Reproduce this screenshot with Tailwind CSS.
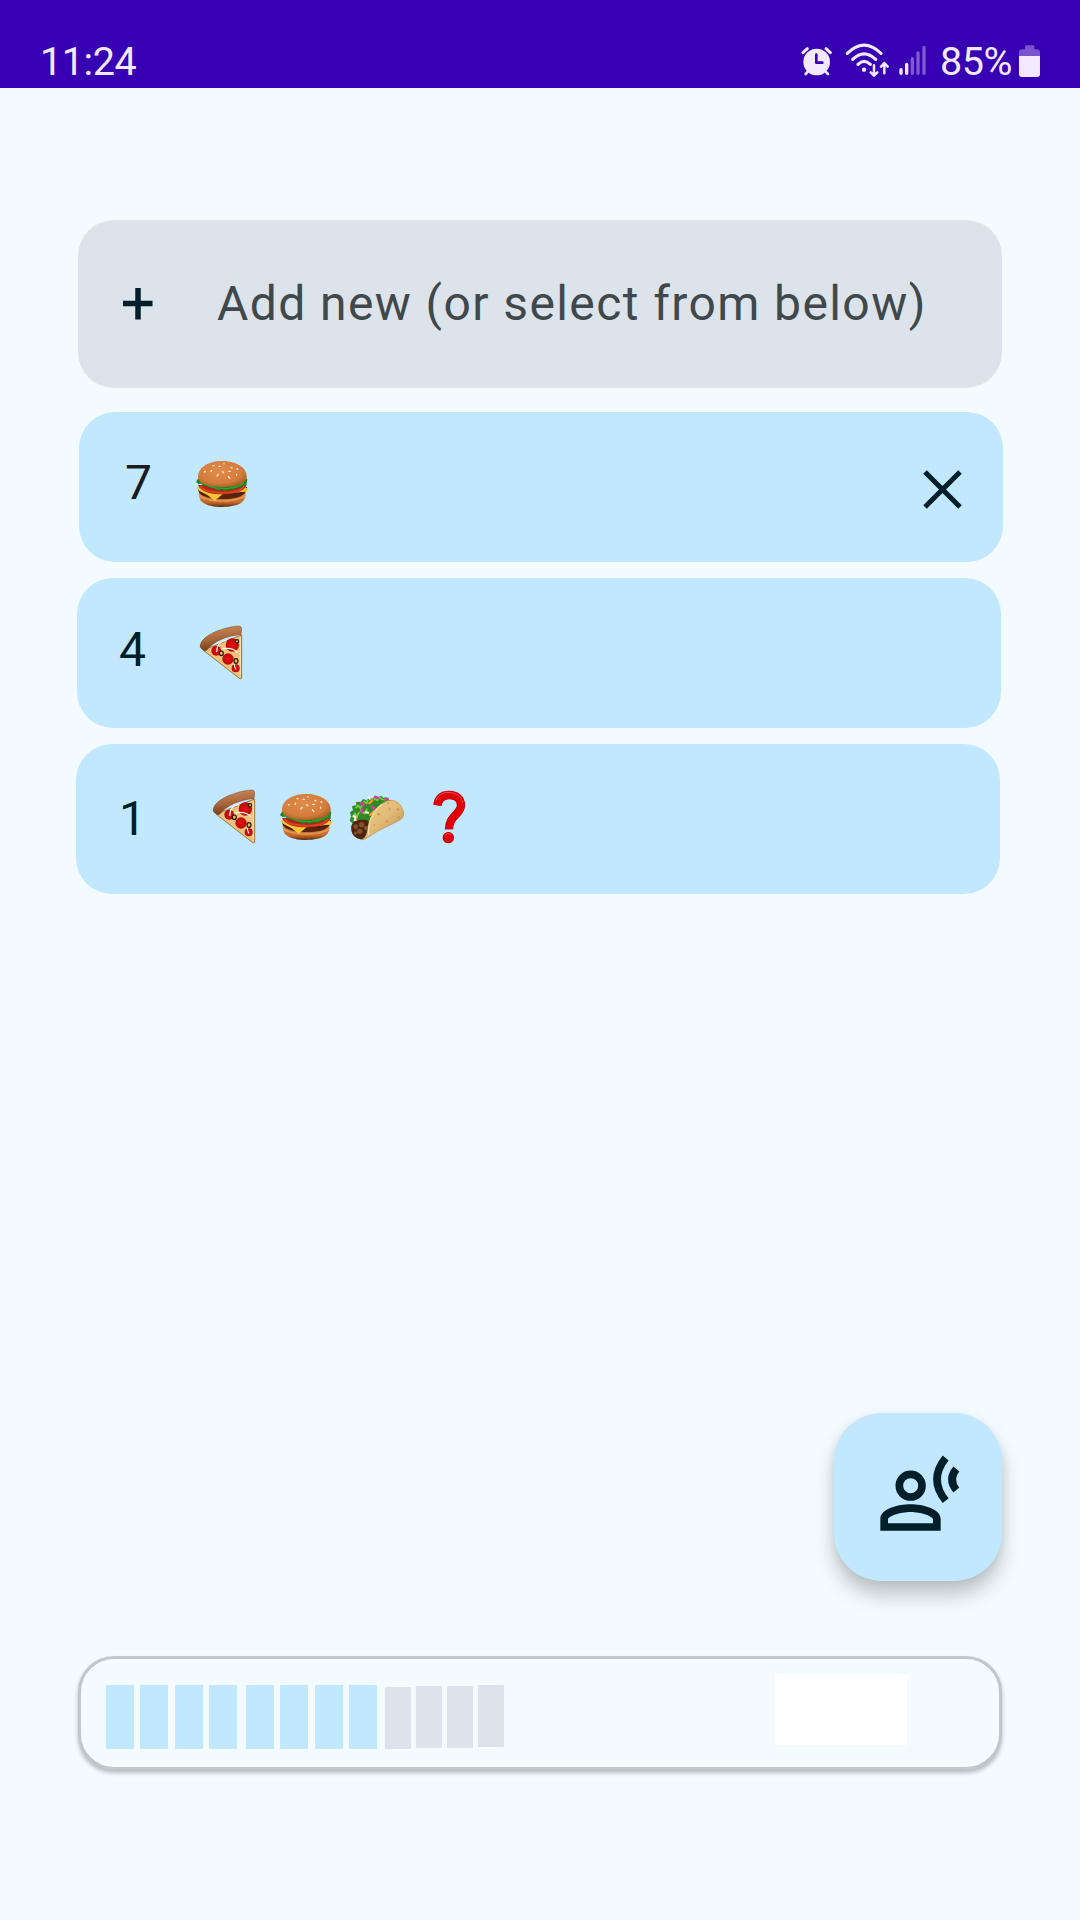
<!DOCTYPE html>
<html lang="en">
<head>
<meta charset="utf-8">
<meta name="viewport" content="width=device-width, initial-scale=1">
<title>Food list</title>
<script src="https://cdn.jsdelivr.net/npm/@tailwindcss/browser@4"></script>
</head>
<body class="bg-[#f3fbff] font-['Roboto',sans-serif]">
<svg class="absolute h-0 w-0" aria-hidden="true">
  <defs>
    <radialGradient id="bun" cx=".45" cy=".4" r=".65"><stop offset="0" stop-color="#e08c4c"/><stop offset=".7" stop-color="#d47c3c"/><stop offset="1" stop-color="#a95a22"/></radialGradient>
    <linearGradient id="base" x1="0" y1="0" x2="0" y2="1"><stop offset="0" stop-color="#d98a48"/><stop offset=".7" stop-color="#c4672a"/><stop offset="1" stop-color="#5e2c0c"/></linearGradient>
    <linearGradient id="crust" x1=".4" y1="0" x2=".6" y2="1"><stop offset="0" stop-color="#c98a58"/><stop offset=".5" stop-color="#a9663a"/><stop offset="1" stop-color="#6b3415"/></linearGradient>
    <linearGradient id="shell" x1="0" y1="0" x2="1" y2="1"><stop offset="0" stop-color="#eccb8c"/><stop offset=".5" stop-color="#e3bb78"/><stop offset="1" stop-color="#b98842"/></linearGradient>
    <radialGradient id="pep"><stop offset="0" stop-color="#e81414"/><stop offset="1" stop-color="#b80808"/></radialGradient>
  </defs>
  <symbol id="burger" viewBox="405 177 165 150">
    <path d="M416 276c0 12 3 24 10 30 14 11 36 15 60 15s46-4 60-14c7-6 11-18 11-29z" fill="url(#base)"/>
    <path d="M413 262c2 18 8 22 20 27 30 12 82 10 108-1 14-6 19-13 20-27z" fill="#4f200b"/>
    <path d="M417 282c14 24 118 26 140 0l-1 8c-30 20-110 20-138 0z" fill="#e49a55"/>
    <path d="M410 262l12-2 36 14 75-4 22-9 11 8-7 6-15 1-30 4h-22l-28 22-22-17-25-13z" fill="#f6c435"/>
    <path d="M488 284c20 3 46-1 62-8l-6 12c-18 8-44 10-68 6z" fill="#5b2309"/>
    <path d="M414 255c8 19 31 26 62 28 34 2 77-5 84-29z" fill="#a92b13"/>
    <path d="M421 259c12 15 36 18 58 19 30 1 64-4 74-20" fill="none" stroke="#dc4128" stroke-width="6"/>
    <path d="M414 236l-6 10 8 6 8-1 7 7 12-1 10 8 12-1 9 8 13-4 11 6 10-7 13 3 9-8 12 1 8-7 9 1 3-21z" fill="#198524"/>
    <path d="M420 246l24 11 24 7 31 2 29-5 25-12" fill="none" stroke="#35a330" stroke-width="4"/>
    <path d="M414 232c-1-31 33-49 73-49s74 19 73 49c-1 23-42 29-73 29-34 0-72-7-73-29z" fill="url(#bun)"/>
    <g stroke="#fff0d5" stroke-width="4" stroke-linecap="round"><path d="M436 214l-3 2M455 211l-2 3M462 197h-3M481 199h-4M492 191v1M474 223l-3 5M488 215l3 3M506 214h5M513 202l3 2M530 223v2M505 230l4 5M531 206l2 2"/></g>
  </symbol>
  <symbol id="pizza" viewBox="417 165 132 165">
    <path d="M433 239L545 195V325q-3 3-7 0L430 241z" fill="#efc27c" stroke="#8f622c" stroke-width="2.5"/>
    <path d="M541 204v110" stroke="#f8dfa5" stroke-width="4"/>
    <circle cx="469" cy="242" r="15" fill="url(#pep)"/><circle cx="517" cy="225" r="20" fill="url(#pep)"/><circle cx="504" cy="267" r="17" fill="url(#pep)"/><circle cx="527" cy="295" r="12" fill="url(#pep)"/>
    <path d="M470 246c1-22 11-34 29-34M482 237c24-4 41-3 51 12M523 282c0 8 2 12 5 16" fill="none" stroke="#fff6e6" stroke-width="3.5"/>
    <g fill="#e7b65b" stroke="#251505" stroke-width="3.5"><ellipse cx="484" cy="250" rx="6" ry="7"/><ellipse cx="528" cy="273" rx="6" ry="7"/><circle cx="531" cy="214" r="5"/></g>
    <path d="M421 224c9-32 77-54 115-56q9 0 9 9l-2 17c-42 2-84 21-102 46q-5 5-12 0-12-9-8-16z" fill="url(#crust)" stroke="#7c4824" stroke-width="1.5"/>
  </symbol>
  <symbol id="taco" viewBox="864 189 174 144">
    <path d="M880 281l-11-8 4-14-3-12 9-6-3-12 12-3 1-11 13 1 7-9 11 4 7-8 10 3 8-8 10 4 8-5 7 6 10-1 6 8 14 4-66 67z" fill="#2f8a26"/>
    <g fill="none" stroke="#7bd047" stroke-width="5" stroke-linecap="round"><path d="M877 260l8-9 5 9 7-12M888 233l6-7 7 9 8-14M912 214l8 6 3-9M943 206l9 5 6-9 9 6M902 242l11 8 8-12M972 209l8-4"/></g>
    <g fill="none" stroke="#d3409a" stroke-width="8" stroke-linecap="round"><path d="M904 219l7 8M946 201l8 3M936 230l9 8M977 207h6M906 238l-1 9"/></g>
    <path d="M926 222l13-13M928 256l17-14M885 261h9" stroke="#f39b20" stroke-width="7"/>
    <path d="M882 258l4 5M918 247l6 1M927 201l2 5M884 270l5 2" stroke="#fff4ee" stroke-width="7" stroke-linecap="round"/>
    <path d="M874 288c4-17 23-21 47-18l11 16-19 41c-24 5-43-13-39-39z" fill="#4e260f"/>
    <g fill="#83502c"><circle cx="887" cy="290" r="7"/><circle cx="905" cy="284" r="8"/><circle cx="899" cy="304" r="8"/><circle cx="919" cy="294" r="7"/><circle cx="886" cy="309" r="5"/></g>
    <path d="M901 329c17-2 19-15 23-35 5-29 18-60 46-76 22-13 43-7 54 12 10 18 10 30-3 39-25 15-66 30-91 49-12 9-19 11-29 11z" fill="url(#shell)" stroke="#b78c4e" stroke-width="2"/>
    <path d="M926 315c-3-34 9-72 41-92" fill="none" stroke="#f3d9a3" stroke-width="4"/>
    <g fill="#cf9c55"><circle cx="956" cy="253" r="4"/><circle cx="989" cy="238" r="3"/><circle cx="1014" cy="238" r="4"/><circle cx="981" cy="274" r="4"/><circle cx="943" cy="286" r="3"/><circle cx="1016" cy="262" r="4"/><circle cx="984" cy="219" r="3"/></g>
  </symbol>
  <symbol id="question" viewBox="1116 180 102 162">
    <path d="M1132 226c3-21 16-31 36-31 20 0 35 11 35 31 0 28-36 30-36 72" fill="none" stroke="#b90008" stroke-width="25"/>
    <path d="M1132 226c3-21 16-31 36-31 20 0 35 11 35 31 0 28-36 30-36 72" fill="none" stroke="#e00008" stroke-width="21"/>
    <path d="M1128 212c6-17 18-24 36-25 22 0 41 11 44 31" fill="none" stroke="#f25a5e" stroke-width="2.5"/>
    <circle cx="1165" cy="323" r="17" fill="#b90008"/><circle cx="1165" cy="322" r="15" fill="#e00008"/>
    <path d="M1155 315q8-8 17-2" fill="none" stroke="#f56669" stroke-width="2.5"/>
  </symbol>
</svg>

<div class="flex h-[1920px] w-[1080px] flex-col overflow-hidden">
  <header class="flex h-[88px] shrink-0 items-start bg-[#3700b3] pt-[38px] pr-[39px] pl-[40px] text-[#f3e9ff]">
    <span class="text-[39.5px] leading-[47px] tracking-[-0.4px]">11:24</span>
    <svg class="mt-1 ml-auto h-9 w-32" viewBox="60 36 384 108">
      <circle cx="110" cy="96" r="40" fill="#f3e9ff"/>
      <path d="M69 68l13-12M151 68l-13-12" stroke="#f3e9ff" stroke-width="9" stroke-linecap="round"/>
      <path d="M84 124l-7 8M136 124l8 8" stroke="#f3e9ff" stroke-width="8" stroke-linecap="round"/>
      <path d="M109 74v24h18" fill="none" stroke="#3700b3" stroke-width="8" stroke-linecap="round" stroke-linejoin="round"/>
      <g fill="none" stroke="#f3e9ff" stroke-width="9.500" stroke-linecap="round"><path d="M202 70q50-49 101 0M218 88q34-33 69 0M234 103q18-18 37 0"/></g>
      <circle cx="252" cy="119" r="6.500" fill="#f3e9ff"/>
      <path d="M282 106v30M272 127l10 10 10-10M313 130v-30M303 110l10-11 10 11" fill="none" stroke="#f3e9ff" stroke-width="7.500" stroke-linecap="round" stroke-linejoin="round"/>
      <path d="M363 119v11M380 103v27" stroke="#f3e9ff" stroke-width="10" stroke-linecap="round"/>
      <path d="M397 86v44M414 69v61M432 52v78" stroke="#8059d1" stroke-width="10" stroke-linecap="round"/>
    </svg>
    <span class="ml-[12px] w-[71px] text-[39.5px] leading-[47px] tracking-[-0.5px]">85%</span>
    <svg class="mt-[6px] ml-[7px] h-[34px] w-[23px]" viewBox="714 42 69 102">
      <path d="M717 78V68q0-10 10-10h8V50q0-4 4-4h20q4 0 4 4v8h7q10 0 10 10v10z" fill="#7b53cc"/>
      <path d="M717 78h63v54q0 9-9 9h-45q-9 0-9-9z" fill="#f3e9ff"/>
    </svg>
  </header>

  <main class="flex flex-col">
    <div class="mt-[132px] ml-[78px] flex h-[168px] w-[924px] items-center rounded-[36px] bg-[#dce3ea]">
      <svg class="ml-[45px] h-8 w-[30px]" viewBox="0 0 30 32"><path d="M0 15.500h29.500M15 0v31.500" stroke="#001f2a" stroke-width="5.500"/></svg>
      <span class="ml-[64px] text-[48px] leading-[56px] tracking-[1.41px] whitespace-nowrap text-[#40484c]">Add new (or select from below)</span>
    </div>

    <div class="mt-6 ml-[79px] flex h-[150px] w-[924px] items-start rounded-[36px] bg-[#c2e8ff]">
      <span class="mt-[43px] ml-[46px] w-[70px] text-[48px] leading-[56px] text-[#191c1e]">7</span>
      <svg class="mt-[47px] h-[50px] w-[55px]"><use href="#burger"/></svg>
      <svg class="mt-[58px] mr-[41px] ml-auto h-[39px] w-[39px]" viewBox="0 0 39 39"><path d="M2 2l35 35M37 2L2 37" stroke="#001f2a" stroke-width="5"/></svg>
    </div>

    <div class="mt-4 ml-[77px] flex h-[150px] w-[924px] items-start rounded-[36px] bg-[#c2e8ff]">
      <span class="mt-[44px] ml-[42px] w-[80px] text-[48px] leading-[56px] text-[#001f2a]">4</span>
      <svg class="mt-[47px] h-[55px] w-[44px]"><use href="#pizza"/></svg>
    </div>

    <div class="mt-4 ml-[76px] flex h-[150px] w-[924px] items-start rounded-[36px] bg-[#c2e8ff]">
      <span class="mt-[47px] ml-[43px] w-[93px] text-[48px] leading-[56px] text-[#001f2a]">1</span>
      <svg class="mt-[45px] h-[55px] w-[44px]"><use href="#pizza"/></svg>
      <svg class="mt-[48px] ml-[23px] h-[50px] w-[55px]"><use href="#burger"/></svg>
      <svg class="mt-[49px] ml-[14px] h-[48px] w-[58px]"><use href="#taco"/></svg>
      <svg class="mt-[46px] ml-[26px] h-[54px] w-[34px]"><use href="#question"/></svg>
    </div>

    <button class="mt-[519px] ml-[834px] h-[168px] w-[168px] rounded-[48px] bg-[#c2e8ff] shadow-[0_14px_20px_rgba(0,0,0,0.22),0_2px_10px_rgba(0,0,0,0.06)]" aria-label="Speak">
      <svg class="h-full w-full" viewBox="72 69 504 504">
        <circle cx="302" cy="287" r="34" fill="none" stroke="#001f2a" stroke-width="23"/>
        <path fill="#001f2a" fill-rule="evenodd" d="M211 422V387C211 356 265 343 301.500 343S392 356 392 387V422ZM234 400H369V388C369 379 332 366 301.500 366S234 379 234 388Z"/>
        <path d="M407 204Q355 268 407 332M439 237Q413 268 439 300" fill="none" stroke="#001f2a" stroke-width="23"/>
      </svg>
    </button>

    <div class="mt-[75px] ml-[78px] flex h-[114px] w-[924px] items-start rounded-[36px] border-[3px] border-[#c0c7cd] bg-[#f3fbff] pl-[25px] shadow-[0_3px_4px_rgba(0,0,0,0.26)]">
      <div class="mt-[26px] flex h-16">
        <i class="h-16 w-7 bg-[#c2e8ff]"></i>
        <i class="ml-[6px] h-16 w-7 bg-[#c2e8ff]"></i>
        <i class="ml-[7px] h-16 w-7 bg-[#c2e8ff]"></i>
        <i class="ml-[6px] h-16 w-7 bg-[#c2e8ff]"></i>
        <i class="ml-[9px] h-16 w-7 bg-[#c2e8ff]"></i>
        <i class="ml-[6px] h-16 w-7 bg-[#c2e8ff]"></i>
        <i class="ml-[7px] h-16 w-7 bg-[#c2e8ff]"></i>
        <i class="ml-[6px] h-16 w-7 bg-[#c2e8ff]"></i>
        <i class="mt-[2px] ml-[8px] h-[62px] w-[26px] bg-[#dce3ea]"></i>
        <i class="mt-[1px] ml-[5px] h-[62px] w-[26px] bg-[#dce3ea]"></i>
        <i class="mt-[1px] ml-[5px] h-[62px] w-[26px] bg-[#dce3ea]"></i>
        <i class="ml-[5px] h-[62px] w-[26px] bg-[#dce3ea]"></i>
      </div>
      <div class="mt-[15px] ml-[271px] h-[71px] w-[132px] bg-white"></div>
    </div>
  </main>
</div>
</body>
</html>
